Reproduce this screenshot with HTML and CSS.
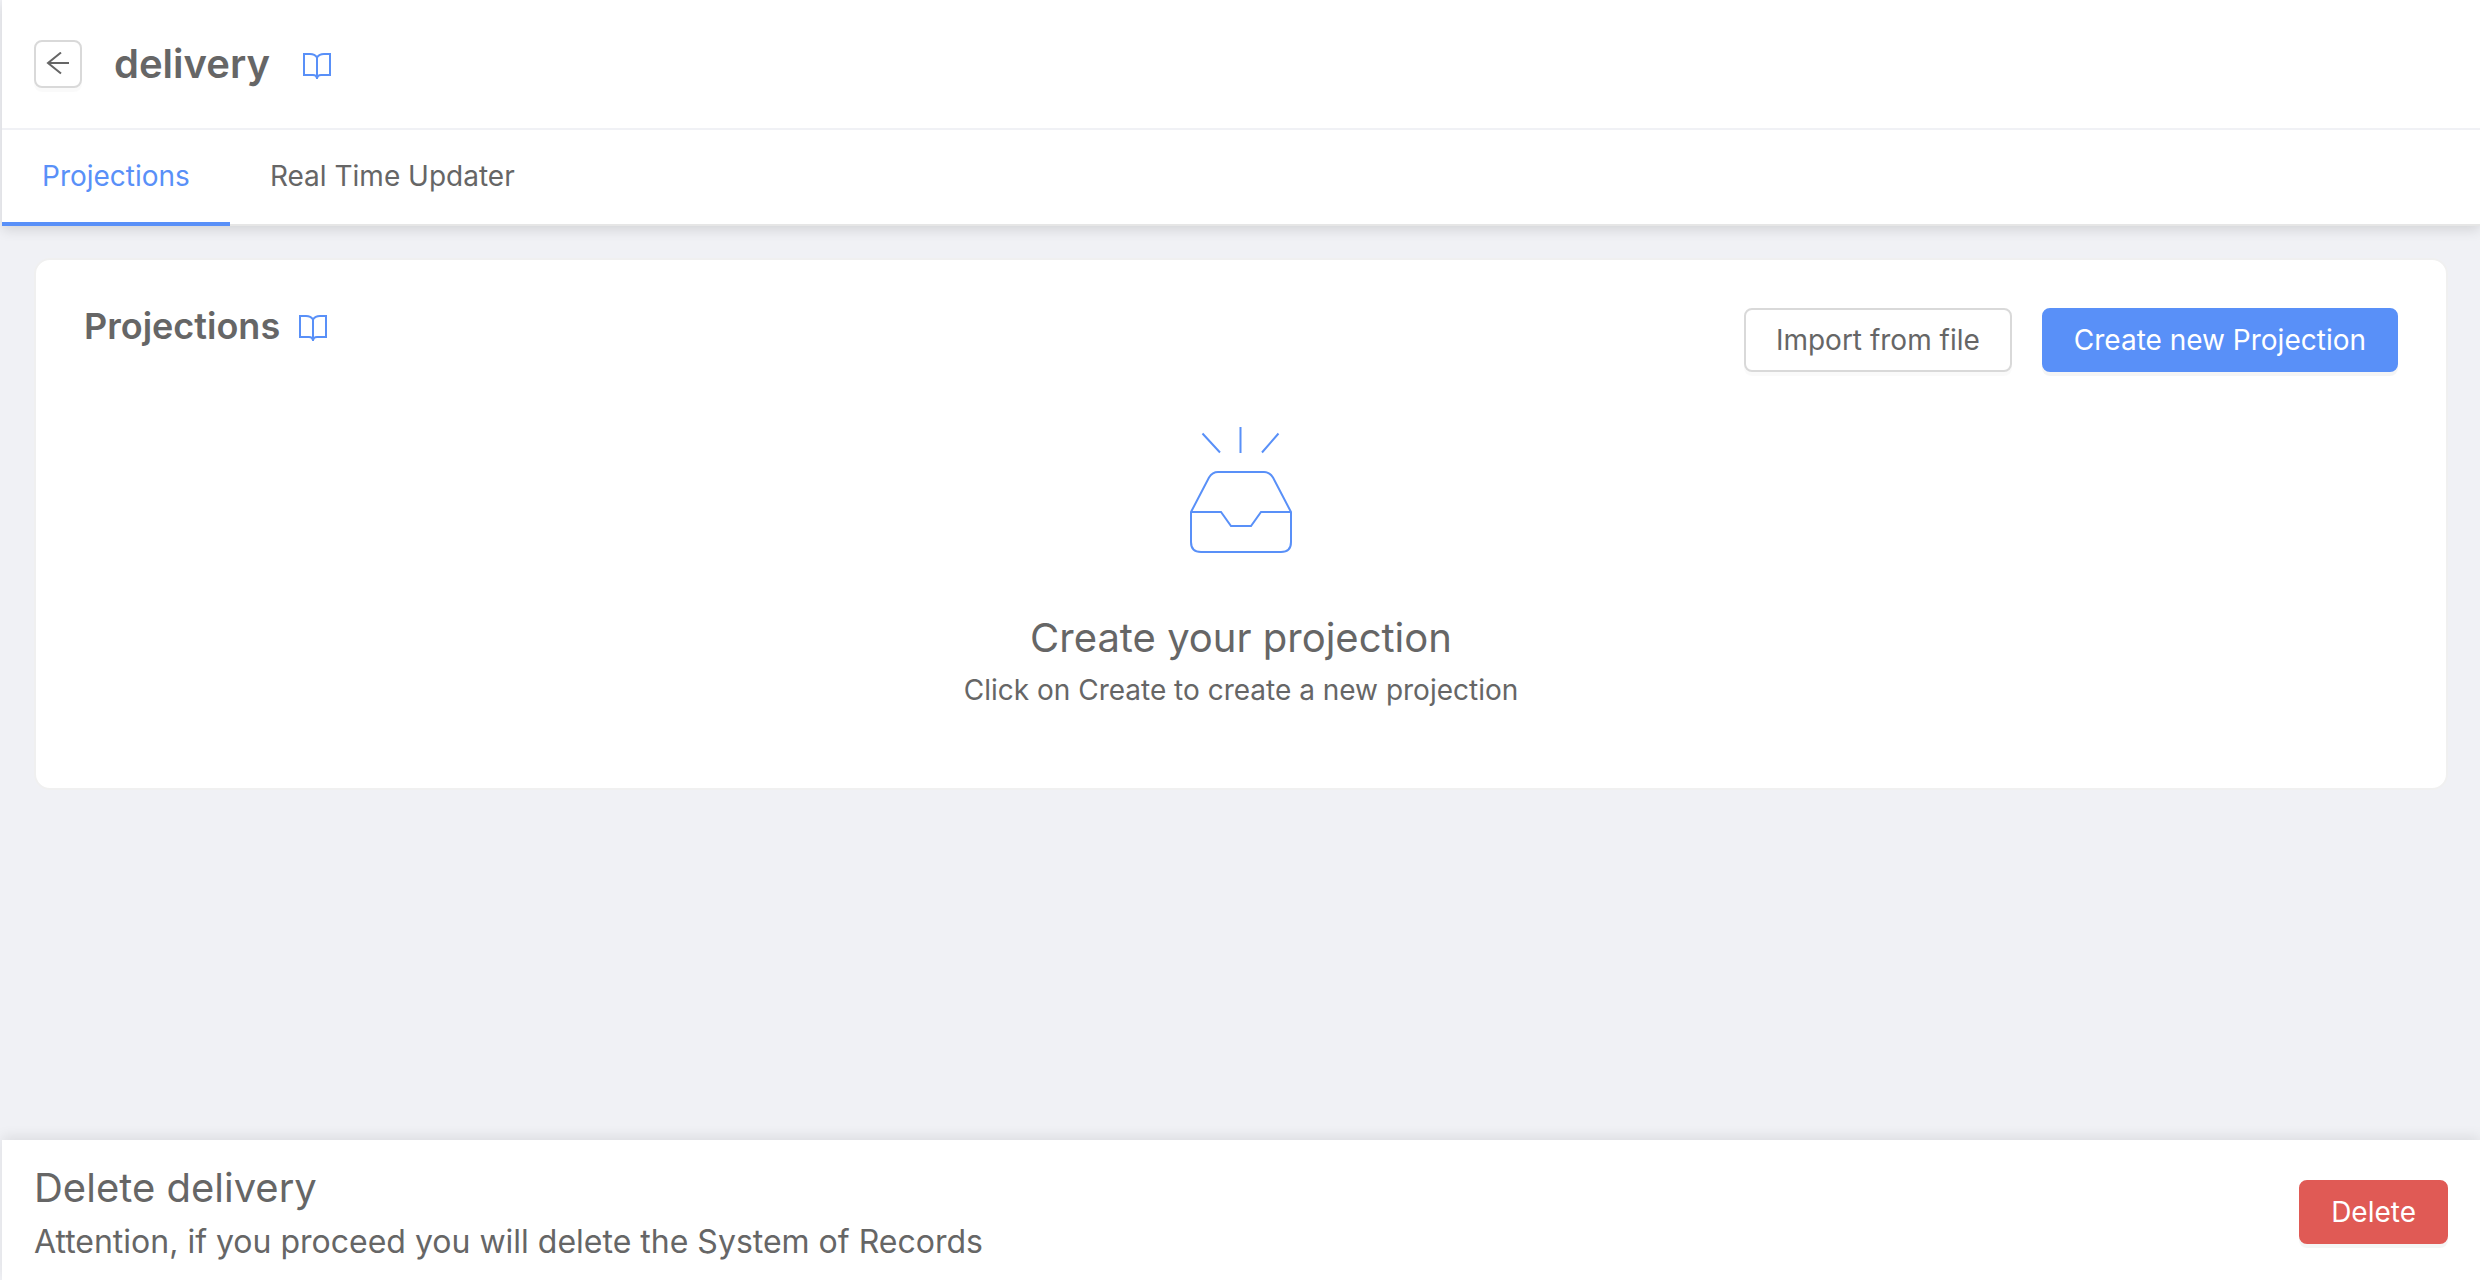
FILE: index.html
```html
<!DOCTYPE html>
<html lang="en">
<head>
<meta charset="utf-8">
<meta name="viewport" content="width=device-width, initial-scale=1">
<title>delivery</title>
<link rel="stylesheet" href="styles.css">
</head>
<body>
<div class="page">
  <header class="header">
    <div class="title-bar">
      <button class="back" type="button" aria-label="Back">
        <svg width="24" height="24" viewBox="0 0 24 24"><path d="M23 11H2M15 0.500L2 11l13 10.500"/></svg>
      </button>
      <h1 class="title">delivery</h1>
      <a class="docs" href="#docs" aria-label="Documentation">
        <svg width="30" height="28" viewBox="0 0 30 28"><path d="M15 5.500C13.500 3 11.500 2 8 2H2v21h9c2 0 3.500.5 4 3 .5-2.500 2-3 4-3h9V2h-6c-3.500 0-5.500 1-7 3.500zV27"/></svg>
      </a>
    </div>
    <nav class="tabs">
      <a class="tab tab-active" href="#projections">Projections</a>
      <a class="tab" href="#updater">Real Time Updater</a>
    </nav>
  </header>
  <main class="content">
    <section class="card">
      <div class="card-head">
        <div class="card-title">
          <h2>Projections</h2>
          <a class="docs" href="#projections-docs" aria-label="Projections documentation">
            <svg width="30" height="28" viewBox="0 0 30 28"><path d="M15 5.500C13.500 3 11.500 2 8 2H2v21h9c2 0 3.500.5 4 3 .5-2.500 2-3 4-3h9V2h-6c-3.500 0-5.500 1-7 3.500zV27"/></svg>
          </a>
        </div>
        <div class="actions">
          <button class="button" type="button">Import from file</button>
          <button class="button button-primary" type="button">Create new Projection</button>
        </div>
      </div>
      <div class="empty">
        <svg class="empty-icon" width="104" height="128" viewBox="0 0 104 128"><path d="M13.500 7.500L31 26.500M51.500 1v26M89.500 7.500L73 26.500M2 86l18-34.500Q23.500 46 29 46h46q5.500 0 9 5.500L102 86v30q0 10-10 10H12Q2 126 2 116zh30l10 14h20l10-14h30"/></svg>
        <h3>Create your projection</h3>
        <p>Click on Create to create a new projection</p>
      </div>
    </section>
  </main>
  <footer class="footer">
    <div class="footer-text">
      <h3>Delete delivery</h3>
      <p>Attention, if you proceed you will delete the System of Records</p>
    </div>
    <button class="button button-danger" type="button">Delete</button>
  </footer>
</div>
</body>
</html>
```
FILE: styles.css
```css
* {
  box-sizing: border-box;
}

body {
  margin: 0;
  background: #f0f1f5;
  color: #666;
  font-family: Inter, sans-serif;
  font-size: 28px;
  line-height: 44px;
}

h1, h2, h3, p {
  margin: 0;
}

h3 {
  font-size: 40px;
  font-weight: 400;
  line-height: 56px;
}

svg {
  display: block;
  fill: none;
  stroke: currentColor;
  stroke-width: 2;
}

.page {
  display: flex;
  flex-direction: column;
  min-height: 100vh;
  border-left: 2px solid #f0f1f5;
}

.header {
  background: #fff;
  border-bottom: 2px solid #e6e6e6;
  box-shadow: 0 4px 12px rgba(0, 0, 0, 0.12);
}

.title-bar {
  display: flex;
  align-items: center;
  height: 130px;
  padding: 0 32px;
  border-bottom: 2px solid #f0f1f5;
}

.back {
  display: flex;
  align-items: center;
  justify-content: center;
  width: 48px;
  height: 48px;
  margin-right: 32px;
  padding: 0;
  border: 2px solid #d9d9d9;
  border-radius: 8px;
  background: #fff;
  color: #666;
  box-shadow: 0 4px 0 rgba(0, 0, 0, 0.02);
}

.title {
  margin-right: 32px;
  font-size: 40px;
  font-weight: 600;
  line-height: 56px;
}

.docs {
  margin-top: 4px;
  color: #5990f8;
}

.tabs {
  display: flex;
}

.tab {
  height: 96px;
  margin-bottom: -2px;
  padding: 24px 40px;
  color: #666;
  text-decoration: none;
}

.tab-active {
  border-bottom: 4px solid #5990f8;
  color: #5990f8;
}

.content {
  flex: 1;
  padding: 32px;
}

.card {
  padding: 48px;
  border: 2px solid #f0f0f0;
  border-radius: 16px;
  background: #fff;
}

.card-head {
  display: flex;
  align-items: flex-start;
  justify-content: space-between;
}

.card-title {
  display: flex;
  align-items: center;
  gap: 18px;
}

.card-title h2 {
  font-size: 36px;
  font-weight: 600;
  line-height: 36px;
}

.actions {
  display: flex;
  gap: 30px;
}

.button {
  height: 64px;
  padding: 0 30px;
  border: 2px solid #d9d9d9;
  border-radius: 8px;
  background: #fff;
  color: #666;
  font: inherit;
  line-height: 44px;
  box-shadow: 0 4px 0 rgba(0, 0, 0, 0.02);
}

.button-primary {
  border-color: #5990f8;
  background: #5990f8;
  color: #fff;
  box-shadow: 0 4px 0 rgba(0, 0, 0, 0.04);
}

.button-danger {
  border-color: #e05a55;
  background: #e05a55;
  color: #fff;
  box-shadow: 0 4px 0 rgba(0, 0, 0, 0.04);
}

.empty {
  display: flex;
  flex-direction: column;
  align-items: center;
  padding: 54px 0 28px;
}

.empty-icon {
  margin-bottom: 56px;
  color: #5990f8;
}

.empty p {
  margin-top: 2px;
}

.footer {
  display: flex;
  align-items: center;
  justify-content: space-between;
  min-height: 140px;
  padding: 4px 32px 0;
  background: #fff;
  box-shadow: 0 -4px 12px rgba(0, 0, 0, 0.08);
}

.footer-text {
  padding-top: 4px;
}

.footer p {
  font-size: 32px;
  line-height: 52px;
}
```
